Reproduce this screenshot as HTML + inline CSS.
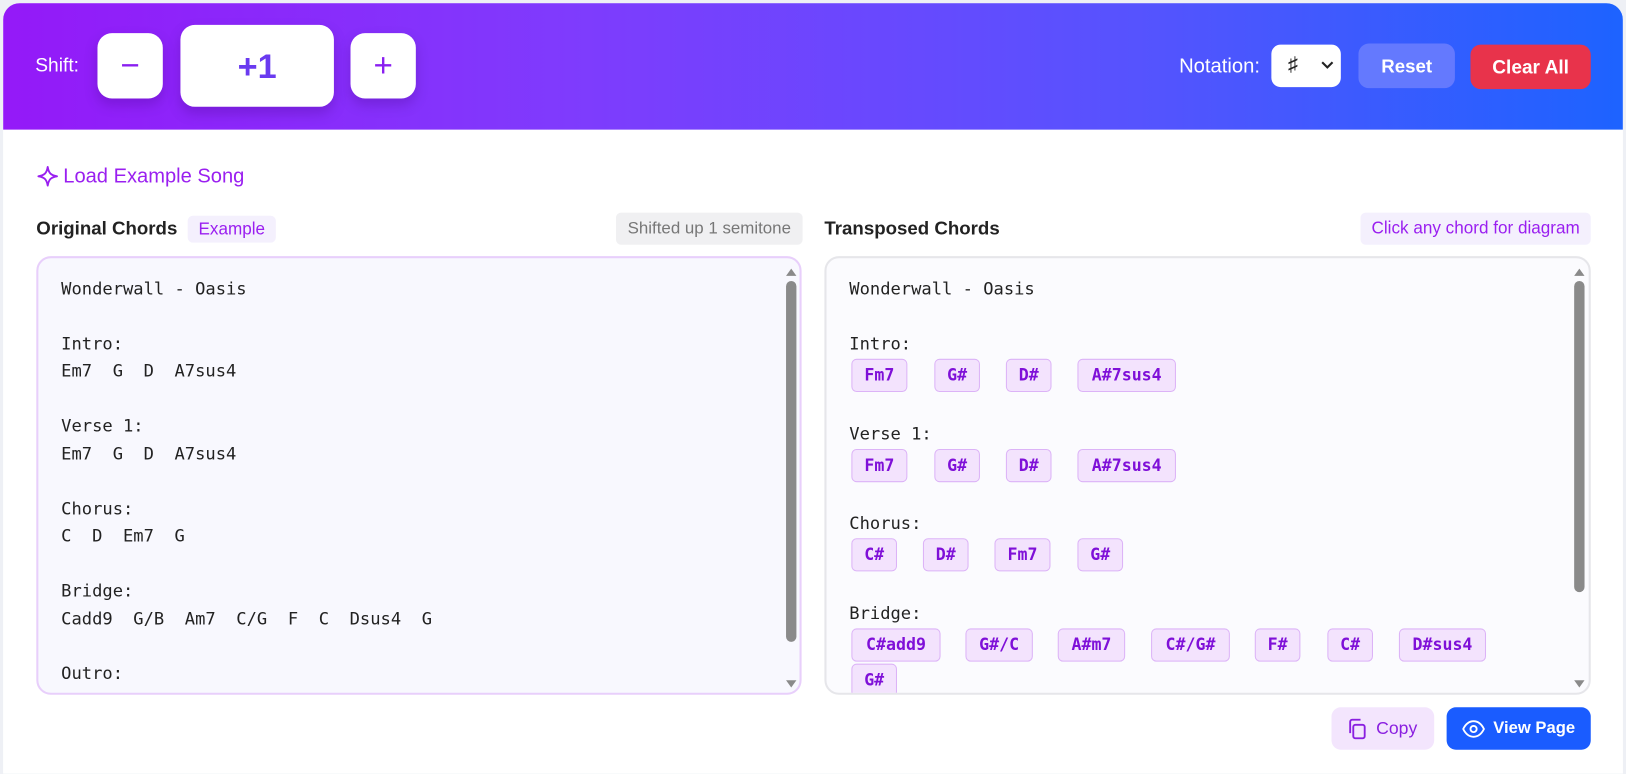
<!DOCTYPE html>
<html style="width:1626px;height:774px;overflow:hidden"><head><meta charset="utf-8"><style>
*{box-sizing:border-box;margin:0;padding:0}
body{width:1626px;height:774px;background:#eef0f5;font-family:"Liberation Sans",sans-serif;position:relative;overflow:hidden}
.wrap{position:absolute;left:0;top:0;width:1568px;height:746px;transform:scale(1.037);transform-origin:0 0;overflow:hidden}
.card{position:absolute;left:3px;top:3px;width:1562px;height:760px;background:#fff;border-radius:16px 16px 0 0;overflow:hidden}
.hdr{position:absolute;left:0;top:0;width:1562px;height:122px;background:linear-gradient(90deg,#9419f8 0%,#7f3bfd 35%,#5653fe 70%,#1d63ff 100%)}
.abs{position:absolute}
.wb{background:#fff;border-radius:14px;box-shadow:0 6px 12px rgba(60,0,120,.25);display:flex;align-items:center;justify-content:center;color:#8a1ff0}
.mono{font-family:"DejaVu Sans Mono","Liberation Mono",monospace}
.ta{position:absolute;border-radius:14px;overflow:hidden}
.line{position:absolute;left:22px;font-size:16.5px;color:#222;white-space:pre}
.chip{position:absolute;height:32px;border:1px solid #dcb3f7;background:#f3e3fd;border-radius:5px;color:#7f10d8;font-weight:bold;font-size:16px;line-height:30px;text-align:center}
.sb{position:absolute;width:10px;background:#8a8a8a;border-radius:5px}
.arr{position:absolute;width:0;height:0;border-left:5px solid transparent;border-right:5px solid transparent}
</style></head><body>
<div class="wrap">
<div class="card">
<div class="hdr">
 <div class="abs" style="left:31px;top:49px;color:#fff;font-size:18.5px">Shift:</div>
 <div class="abs wb" style="left:91px;top:29px;width:63px;height:63px;font-size:32px;font-weight:300">−</div>
 <div class="abs wb" style="left:171px;top:21px;width:148px;height:79px;font-size:33px;font-weight:bold;color:#6a3af0">+1</div>
 <div class="abs wb" style="left:335px;top:29px;width:63px;height:63px;font-size:32px;font-weight:300">+</div>
 <div class="abs" style="left:1134px;top:50px;color:#fff;font-size:19.5px">Notation:</div>
 <div class="abs" style="left:1223px;top:40px;width:67px;height:41px;background:#fff;border-radius:9px;font-size:19px;font-weight:bold;color:#222"><span class="abs" style="left:16px;top:9px">♯</span>
  <svg class="abs" style="left:48px;top:15px" width="12" height="10"><path d="M1 2l5 5 5-5" stroke="#222" stroke-width="2" fill="none"/></svg></div>
 <div class="abs" style="left:1307px;top:39px;width:93px;height:43px;background:#6479fe;border-radius:10px;color:#fff;font-weight:bold;font-size:18px;text-align:center;line-height:45px">Reset</div>
 <div class="abs" style="left:1415px;top:40px;width:116px;height:43px;background:#e8334b;border-radius:10px;color:#fff;font-weight:bold;font-size:18.4px;text-align:center;line-height:43px">Clear All</div>
</div>
<svg class="abs" style="left:33px;top:157px" width="20" height="20" viewBox="0 0 20 20"><path d="M10 1C11 7 13 9 19 10C13 11 11 13 10 19C9 13 7 11 1 10C7 9 9 7 10 1Z" fill="none" stroke="#9a1ff0" stroke-width="1.8" stroke-linejoin="round"/></svg>
<div class="abs" style="left:58px;top:156px;color:#9a1ff0;font-size:19.4px">Load Example Song</div>
<div class="abs" style="left:32px;top:207px;font-size:18px;font-weight:bold;color:#222">Original Chords</div>
<div class="abs" style="left:178px;top:205px;width:85px;height:26px;background:#f4f0fd;border-radius:5px;color:#9a1ff0;font-size:16.5px;text-align:center;line-height:26px">Example</div>
<div class="abs" style="left:591px;top:202px;width:180px;height:31px;background:#f0f0f2;border-radius:5px;color:#777;font-size:16.3px;text-align:center;line-height:31px">Shifted up 1 semitone</div>
<div class="abs" style="left:792px;top:207px;font-size:18px;font-weight:bold;color:#222">Transposed Chords</div>
<div class="abs" style="left:1309px;top:202px;width:222px;height:31px;background:#f4f0fd;border-radius:5px;color:#9a1ff0;font-size:16.5px;text-align:center;line-height:31px">Click any chord for diagram</div>

<div class="ta mono" style="left:32px;top:244px;width:738px;height:423px;border:2px solid #e8cffb;background:#f8f8fe">
 <div class="line" style="top:20px">Wonderwall - Oasis</div>
 <div class="line" style="top:73px">Intro:</div>
 <div class="line" style="top:99px">Em7  G  D  A7sus4</div>
 <div class="line" style="top:152px">Verse 1:</div>
 <div class="line" style="top:179px">Em7  G  D  A7sus4</div>
 <div class="line" style="top:232px">Chorus:</div>
 <div class="line" style="top:258px">C  D  Em7  G</div>
 <div class="line" style="top:311px">Bridge:</div>
 <div class="line" style="top:338px">Cadd9  G/B  Am7  C/G  F  C  Dsus4  G</div>
 <div class="line" style="top:391px">Outro:</div>
 <div class="arr" style="left:721px;top:10px;border-bottom:7px solid #8a8a8a"></div>
 <div class="sb" style="left:721px;top:22px;height:348px"></div>
 <div class="arr" style="left:721px;top:407px;border-top:7px solid #8a8a8a"></div>
</div>

<div class="ta mono" style="left:792px;top:244px;width:739px;height:423px;border:2px solid #e6e6ea;background:#fbfbfe">
 <div class="line" style="top:20px">Wonderwall - Oasis</div>
 <div class="line" style="top:73px">Intro:</div>
 <div class="chip" style="left:24px;top:97px;width:54px">Fm7</div>
 <div class="chip" style="left:104px;top:97px;width:44px">G#</div>
 <div class="chip" style="left:173px;top:97px;width:44px">D#</div>
 <div class="chip" style="left:242px;top:97px;width:95px">A#7sus4</div>
 <div class="line" style="top:160px">Verse 1:</div>
 <div class="chip" style="left:24px;top:184px;width:54px">Fm7</div>
 <div class="chip" style="left:104px;top:184px;width:44px">G#</div>
 <div class="chip" style="left:173px;top:184px;width:44px">D#</div>
 <div class="chip" style="left:242px;top:184px;width:95px">A#7sus4</div>
 <div class="line" style="top:246px">Chorus:</div>
 <div class="chip" style="left:24px;top:270px;width:44px">C#</div>
 <div class="chip" style="left:93px;top:270px;width:44px">D#</div>
 <div class="chip" style="left:162px;top:270px;width:54px">Fm7</div>
 <div class="chip" style="left:242px;top:270px;width:44px">G#</div>
 <div class="line" style="top:333px">Bridge:</div>
 <div class="chip" style="left:24px;top:357px;width:86px">C#add9</div>
 <div class="chip" style="left:134px;top:357px;width:65px">G#/C</div>
 <div class="chip" style="left:223px;top:357px;width:65px">A#m7</div>
 <div class="chip" style="left:313px;top:357px;width:76px">C#/G#</div>
 <div class="chip" style="left:413px;top:357px;width:44px">F#</div>
 <div class="chip" style="left:483px;top:357px;width:44px">C#</div>
 <div class="chip" style="left:552px;top:357px;width:84px">D#sus4</div>
 <div class="chip" style="left:24px;top:391px;width:44px">G#</div>
 <div class="arr" style="left:721px;top:10px;border-bottom:7px solid #8a8a8a"></div>
 <div class="sb" style="left:721px;top:22px;height:300px"></div>
 <div class="arr" style="left:721px;top:407px;border-top:7px solid #8a8a8a"></div>
</div>

<div class="abs" style="left:1281px;top:679px;width:99px;height:41px;background:#f3e5fd;border-radius:9px;color:#8a1fe0;font-size:17px">
 <svg class="abs" style="left:15px;top:11px" width="20" height="20" viewBox="0 0 20 20"><rect x="6" y="6" width="11" height="13" rx="2" fill="none" stroke="#8a1fe0" stroke-width="1.8"/><path d="M3 14V3a2 2 0 0 1 2-2h8" fill="none" stroke="#8a1fe0" stroke-width="1.8"/></svg>
 <span class="abs" style="left:43px;top:11px">Copy</span></div>
<div class="abs" style="left:1392px;top:679px;width:139px;height:41px;background:#1a5cff;border-radius:9px;color:#fff;font-size:16px;font-weight:bold">
 <svg class="abs" style="left:15px;top:12px" width="22" height="18" viewBox="0 0 22 18"><path d="M1 9C4 3 8 1.5 11 1.5S18 3 21 9C18 15 14 16.5 11 16.5S4 15 1 9Z" fill="none" stroke="#fff" stroke-width="1.8"/><circle cx="11" cy="9" r="3" fill="none" stroke="#fff" stroke-width="1.8"/></svg>
 <span class="abs" style="left:45px;top:12px">View Page</span></div>
</div>
</div>
</body></html>
